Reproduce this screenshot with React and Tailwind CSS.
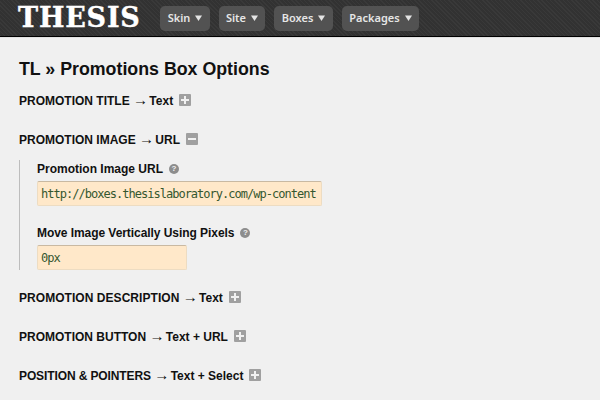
function Caret() {
  return (
    <svg className="w-[7px] h-[6px] ml-[5px]" viewBox="0 0 7 6">
      <path d="M0 0.5h7L3.5 6z" fill="#e4e4e4" />
    </svg>
  );
}

function NavButton({ label, className }) {
  return (
    <div className={`flex items-center justify-center h-[25px] rounded-[5px] bg-[#525252] text-[#e6e6e6] font-['Noto_Sans',sans-serif] font-semibold text-[11px] ${className}`}>
      {label}
      <Caret />
    </div>
  );
}

function ToggleBox({ open }) {
  return (
    <span className="w-3 h-3 rounded-[1px] bg-[#a0a0a0] flex items-center justify-center relative shrink-0 -mt-[2px]">
      <span className="w-2 h-[2px] bg-[#f1f1f1]" />
      {!open && <span className="absolute w-[2px] h-2 bg-[#f1f1f1]" />}
    </span>
  );
}

function Help() {
  return (
    <span className="w-[10px] h-[10px] rounded-full bg-[#8d8d8d] text-[#f1f1f1] text-[8px] font-bold leading-[10px] text-center">
      ?
    </span>
  );
}

function SectionTitle({ name, type, open, nameClass = '' }) {
  return (
    <div className="flex items-center h-4 gap-[6px]">
      <span className="text-[12px] font-bold text-[#111] whitespace-nowrap">
        <span className={nameClass}>{name}</span>{' '}
        <span className="inline-block w-[13px] text-center text-[15px] leading-[12px] font-normal">→</span> {type}
      </span>
      <ToggleBox open={open} />
    </div>
  );
}

function Field({ label, value, width, labelClass = '' }) {
  return (
    <div>
      <div className="flex items-center gap-[6px] h-4">
        <span className={`text-[12px] font-bold text-[#111] ${labelClass}`}>{label}</span>
        <Help />
      </div>
      <div className={`mt-[4px] h-[25px] ${width} bg-[#ffe8c9] border border-[#eddcc2] border-t-[#c9b9a2] rounded-[2px] flex items-center pl-[3px] font-['DejaVu_Sans_Mono',monospace] text-[12px] tracking-[-0.98px] text-[#35572f] whitespace-nowrap overflow-hidden`}>
        {value}
      </div>
    </div>
  );
}

export default function App() {
  return (
    <div className="w-[600px] h-[400px] overflow-hidden bg-[#f0f0f0] font-['Liberation_Sans',sans-serif]">
      {/* Header */}
      <div className="h-[38px] border-b-2 border-[#e2e2e2]">
        <div className="h-[37px] flex items-center pl-[18px] border-b border-black bg-[#363636] bg-[repeating-linear-gradient(45deg,#393939_0px,#393939_1px,#323232_1px,#323232_3px)]">
          <span className="w-[142px] font-['DejaVu_Serif',serif] font-bold text-white text-[27px] leading-none tracking-[0.8px] -mt-[1px] [-webkit-text-stroke:0.4px_white]">
            THESIS
          </span>
          <div className="flex gap-[9px]">
            <NavButton label="Skin" className="w-[50px]" />
            <NavButton label="Site" className="w-[46px]" />
            <NavButton label="Boxes" className="w-[59px]" />
            <NavButton label="Packages" className="w-[77px]" />
          </div>
        </div>
      </div>

      {/* Options */}
      <div className="pl-[19px] pt-[20px]">
        <h1 className="text-[17.8px] leading-[22px] font-bold text-[#111]">TL » Promotions Box Options</h1>

        <div className="mt-[13px]">
          <SectionTitle name="PROMOTION TITLE" type="Text" />
        </div>

        <div className="mt-[23px]">
          <SectionTitle name="PROMOTION IMAGE" type="URL" open />
        </div>

        <div className="mt-[12px] border-l border-[#bdbdbd] pl-[17px] h-[110px] pt-[1px] flex flex-col gap-[19px]">
          <Field label="Promotion Image URL" value="http://boxes.thesislaboratory.com/wp-content" width="w-[285px]" />
          <Field
            label="Move Image Vertically Using Pixels"
            labelClass="tracking-[-0.06px]"
            value="0px"
            width="w-[150px]"
          />
        </div>
      </div>

      <div className="pl-[19px] mt-[20px] flex flex-col gap-[23px]">
        <SectionTitle name="PROMOTION DESCRIPTION" type="Text" nameClass="tracking-[0.05px]" />
        <SectionTitle name="PROMOTION BUTTON" type="Text + URL" />
        <SectionTitle name="POSITION & POINTERS" type="Text + Select" nameClass="tracking-[-0.11px]" />
      </div>
    </div>
  );
}
